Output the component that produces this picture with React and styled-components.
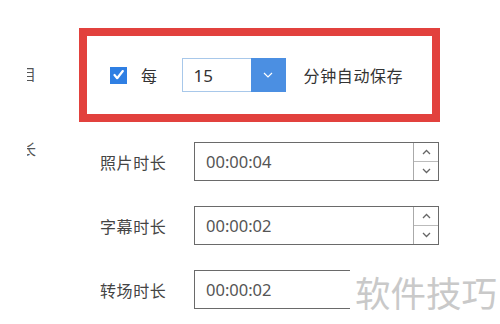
import React from "react";
import styled, { createGlobalStyle } from "styled-components";

const GlobalStyle = createGlobalStyle`
  html, body {
    margin: 0;
    padding: 0;
    background: #fff;
  }
  body {
    font-family: "Noto Sans", "Noto Sans CJK SC", sans-serif;
    color: #333;
  }
`;

const rows = [
  { label: "照片时长", value: "00:00:04", spin: true },
  { label: "字幕时长", value: "00:00:02", spin: true },
  { label: "转场时长", value: "00:00:02", spin: false },
];

export default function App() {
  return (
    <Page>
      <GlobalStyle />
      <LeftColumn>
        <Stub $top={66}>
          <span>项目</span>
        </Stub>
        <Stub $top={59}>
          <span>时长</span>
        </Stub>
      </LeftColumn>
      <Main>
        <HighlightBox>
          <Checkbox>
            <svg width="11" height="10" viewBox="0 0 11 10">
              <polyline
                points="1.5,5 4.2,8.2 9.8,1"
                fill="none"
                stroke="#fff"
                strokeWidth="2.2"
                strokeLinecap="round"
                strokeLinejoin="round"
              />
            </svg>
          </Checkbox>
          <Word>每</Word>
          <Select>
            <SelectValue>15</SelectValue>
            <SelectButton>
              <svg width="10" height="6" viewBox="0 0 10 6">
                <polyline points="1,1 5,5 9,1" fill="none" stroke="#fff" strokeWidth="1.2" />
              </svg>
            </SelectButton>
          </Select>
          <Word>分钟自动保存</Word>
        </HighlightBox>
        <Rows>
          {rows.map((row) => (
            <Row key={row.label}>
              <Label>{row.label}</Label>
              <TimeInput>
                <TimeValue>{row.value}</TimeValue>
                {row.spin && (
                  <Spinner>
                    <SpinButton>
                      <svg width="9" height="6" viewBox="0 0 9 6">
                        <polyline points="1,5 4.5,1.5 8,5" fill="none" stroke="#666" strokeWidth="1.3" />
                      </svg>
                    </SpinButton>
                    <SpinButton>
                      <svg width="9" height="6" viewBox="0 0 9 6">
                        <polyline points="1,1 4.5,4.5 8,1" fill="none" stroke="#666" strokeWidth="1.3" />
                      </svg>
                    </SpinButton>
                  </Spinner>
                )}
              </TimeInput>
            </Row>
          ))}
        </Rows>
      </Main>
      <Watermark>软件技巧</Watermark>
    </Page>
  );
}

const Page = styled.div`
  position: relative;
  width: 500px;
  height: 324px;
  overflow: hidden;
  display: flex;
  background: #fff;
`;

const LeftColumn = styled.div`
  box-sizing: border-box;
  width: 36px;
  padding-left: 27px;
  margin-right: 43px;
  display: flex;
  flex-direction: column;
`;

const Stub = styled.div`
  margin-top: ${(p) => p.$top}px;
  width: 9px;
  height: 16px;
  display: flex;
  justify-content: flex-end;
  overflow: hidden;
  font-size: 15px;
  line-height: 16px;
  color: #555;

  span {
    flex-shrink: 0;
    white-space: nowrap;
  }
`;

const Main = styled.div`
  padding-top: 28px;
  display: flex;
  flex-direction: column;
`;

const HighlightBox = styled.div`
  box-sizing: border-box;
  width: 361px;
  height: 94px;
  border: 8px solid #e2413d;
  padding-left: 23px;
  display: flex;
  align-items: center;
`;

const Checkbox = styled.div`
  width: 17px;
  height: 17px;
  background: #2f7fe3;
  display: flex;
  align-items: center;
  justify-content: center;
  margin-right: 14px;
`;

const Word = styled.span`
  font-size: 16px;
  letter-spacing: 0.6px;
  color: #333;
`;

const Select = styled.div`
  box-sizing: border-box;
  width: 104px;
  height: 34px;
  margin: 0 18px 0 24px;
  border: 1px solid #a8c8ea;
  display: flex;
`;

const SelectValue = styled.div`
  flex: 1;
  padding-left: 11px;
  display: flex;
  align-items: center;
  font-size: 17px;
  color: #333;
`;

const SelectButton = styled.div`
  width: 35px;
  margin: -1px -1px -1px 0;
  background: #4b8fe2;
  display: flex;
  align-items: center;
  justify-content: center;
`;

const Rows = styled.div`
  margin-top: 20px;
  display: flex;
  flex-direction: column;
  gap: 25px;
`;

const Row = styled.div`
  display: flex;
  align-items: center;
  padding-left: 21px;
`;

const Label = styled.span`
  width: 94px;
  font-size: 16px;
  letter-spacing: 0.6px;
  color: #444;
`;

const TimeInput = styled.div`
  box-sizing: border-box;
  width: 245px;
  height: 39px;
  border: 1px solid #6a6a6a;
  display: flex;
`;

const TimeValue = styled.div`
  flex: 1;
  padding-left: 11px;
  display: flex;
  align-items: center;
  font-size: 16.5px;
  color: #555;
`;

const Spinner = styled.div`
  width: 24px;
  border-left: 1px solid #aaa;
  display: flex;
  flex-direction: column;
`;

const SpinButton = styled.div`
  flex: 1;
  display: flex;
  align-items: center;
  justify-content: center;
  & + & {
    border-top: 1px solid #bbb;
  }
`;

const Watermark = styled.div`
  position: absolute;
  left: 350px;
  top: 258px;
  right: 0;
  bottom: 0;
  background: #fff;
  padding-left: 5px;
  display: flex;
  align-items: center;
  font-size: 35.5px;
  color: #c9c9c9;
  white-space: nowrap;
`;
